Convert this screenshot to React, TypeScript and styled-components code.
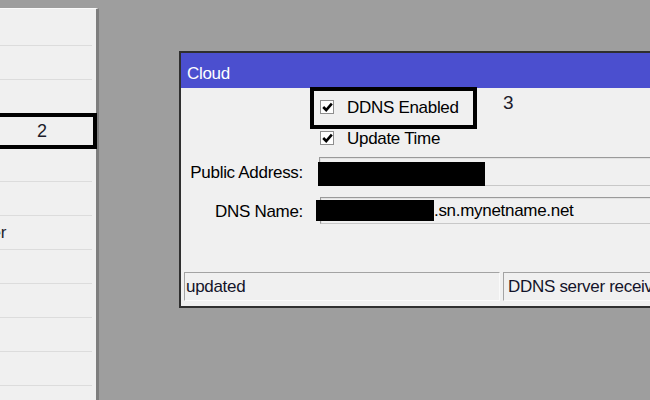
import React from "react";
import styled, { createGlobalStyle, css } from "styled-components";

const Global = createGlobalStyle`
  html, body { margin: 0; padding: 0; background: #9e9e9e; }
  body { font-family: "Liberation Sans", Arial, sans-serif; }
`;

const Screen = styled.div`
  width: 650px;
  height: 400px;
  overflow: hidden;
  display: flex;
  align-items: flex-start;
  background: #9e9e9e;
  font-size: 17px;
  letter-spacing: -0.3px;
`;

const SidePanel = styled.div`
  flex: 0 0 auto;
  width: 99px;
  height: 392px;
  margin-top: 8px;
  box-sizing: border-box;
  background: #f0f0f0;
  border-top: 1px solid #fbfbfb;
  border-right: 3px solid #7e7e7e;
  padding-top: 3px;
`;

const ListRow = styled.div<{ $marked?: boolean }>`
  position: relative;
  width: 92px;
  height: 34px;
  box-sizing: border-box;
  border-bottom: 1px solid #dcdcdc;
  display: flex;
  align-items: center;
  color: #1c1c2a;
  ${(p) =>
    p.$marked &&
    css`
      &::after {
        content: "";
        position: absolute;
        left: -4px;
        right: -5px;
        top: -1px;
        bottom: -2px;
        border: 4px solid #000;
      }
    `}
`;

const RowNumber = styled.span`
  padding: 1px 0 0 37px;
  font-size: 18px;
`;

const ClippedLabel = styled.span`
  width: 6px;
  display: flex;
  justify-content: flex-end;
  white-space: nowrap;
`;

const Dialog = styled.div`
  flex: 0 0 auto;
  width: 520px;
  height: 257px;
  margin-left: 80px;
  margin-top: 51px;
  box-sizing: border-box;
  border: 2px solid #2f2f2f;
  border-right: none;
  background: #f0f0f0;
  display: flex;
  flex-direction: column;
`;

const TitleBar = styled.div`
  height: 35px;
  flex: 0 0 auto;
  background: #4b4fcf;
  color: #fff;
  display: flex;
  align-items: center;
  padding: 6px 0 0 6px;
  box-sizing: border-box;
`;

const Body = styled.div`
  flex: 1;
  display: flex;
  flex-direction: column;
  padding: 9px 0 5px 0;
  color: #000;
`;

const FormRow = styled.div<{ $gap: number }>`
  display: flex;
  align-items: center;
  margin-top: ${(p) => p.$gap}px;
`;

const LabelCell = styled.div`
  width: 138px;
  flex: 0 0 auto;
  box-sizing: border-box;
  padding: 3px 16px 0 0;
  text-align: right;
  white-space: nowrap;
`;

const CheckLine = styled.label<{ $highlight?: boolean }>`
  display: flex;
  align-items: center;
  gap: 13px;
  height: 22px;
  margin-left: 1px;
  box-sizing: border-box;
  white-space: nowrap;
  ${(p) =>
    p.$highlight &&
    css`
      width: 147px;
      outline: 4px solid #000;
      outline-offset: 6px;
    `}
`;

const Box = styled.span`
  width: 14px;
  height: 14px;
  flex: 0 0 auto;
  box-sizing: border-box;
  border: 1px solid #8e8e8e;
  background: #fff;
  display: flex;
  align-items: center;
  justify-content: center;
  margin-top: -2px;
`;

const Callout = styled.span`
  align-self: flex-start;
  margin-left: 36px;
  margin-top: -5px;
  font-size: 19px;
  color: #1c1c2a;
`;

const Field = styled.div<{ $h: number; $shift?: number }>`
  flex: 1;
  height: ${(p) => p.$h}px;
  margin-left: ${(p) => p.$shift ?? 0}px;
  box-sizing: border-box;
  border-top: 1px solid #9a9a9a;
  border-left: 1px solid #9a9a9a;
  border-bottom: 1px solid #c8c8c8;
  box-shadow: inset 1px 1px 0 #e2e2e2;
  display: flex;
  align-items: flex-end;
  white-space: nowrap;
`;

const Redacted = styled.span<{ $w: number; $h: number; $x: number; $y: number }>`
  flex: 0 0 auto;
  width: ${(p) => p.$w}px;
  height: ${(p) => p.$h}px;
  margin-left: ${(p) => p.$x}px;
  margin-bottom: ${(p) => p.$y}px;
  background: #000;
`;

const FieldText = styled.span`
  align-self: center;
  padding-top: 1px;
`;

const StatusBar = styled.div`
  margin-top: auto;
  display: flex;
  gap: 3px;
  padding-left: 3px;
`;

const StatusCell = styled.div<{ $w?: number; $pad: number }>`
  ${(p) => (p.$w ? `width: ${p.$w}px; flex: 0 0 auto;` : "flex: 1;")}
  height: 29px;
  box-sizing: border-box;
  border-top: 1px solid #a3a3a3;
  border-left: 1px solid #a3a3a3;
  border-bottom: 1px solid #fafafa;
  border-right: 1px solid #fafafa;
  padding-left: ${(p) => p.$pad}px;
  display: flex;
  align-items: center;
  white-space: nowrap;
  color: #14142a;
`;

const Check = () => (
  <svg width="11" height="10" viewBox="0 0 11 10">
    <path d="M1.2 5 L4.2 8 L9.8 1.6" fill="none" stroke="#000" strokeWidth="2.6" />
  </svg>
);

const rows = Array.from({ length: 12 }, (_, i) => i);

export default function App() {
  return (
    <>
      <Global />
      <Screen>
        <SidePanel>
          {rows.map((i) => (
            <ListRow key={i} $marked={i === 3}>
              {i === 3 && <RowNumber>2</RowNumber>}
              {i === 6 && <ClippedLabel>Server</ClippedLabel>}
            </ListRow>
          ))}
        </SidePanel>
        <Dialog>
          <TitleBar>Cloud</TitleBar>
          <Body>
            <FormRow $gap={0}>
              <LabelCell />
              <CheckLine $highlight>
                <Box>
                  <Check />
                </Box>
                DDNS Enabled
              </CheckLine>
              <Callout>3</Callout>
            </FormRow>
            <FormRow $gap={9}>
              <LabelCell />
              <CheckLine>
                <Box>
                  <Check />
                </Box>
                Update Time
              </CheckLine>
            </FormRow>
            <FormRow $gap={7}>
              <LabelCell>Public Address:</LabelCell>
              <Field $h={29}>
                <Redacted $w={167} $h={24} $x={-2} $y={-1} />
              </Field>
            </FormRow>
            <FormRow $gap={11}>
              <LabelCell>DNS Name:</LabelCell>
              <Field $h={27} $shift={1}>
                <Redacted $w={118} $h={21} $x={-5} $y={2} />
                <FieldText>.sn.mynetname.net</FieldText>
              </Field>
            </FormRow>
            <StatusBar>
              <StatusCell $w={316} $pad={1}>
                updated
              </StatusCell>
              <StatusCell $pad={4}>DDNS server received request</StatusCell>
            </StatusBar>
          </Body>
        </Dialog>
      </Screen>
    </>
  );
}
